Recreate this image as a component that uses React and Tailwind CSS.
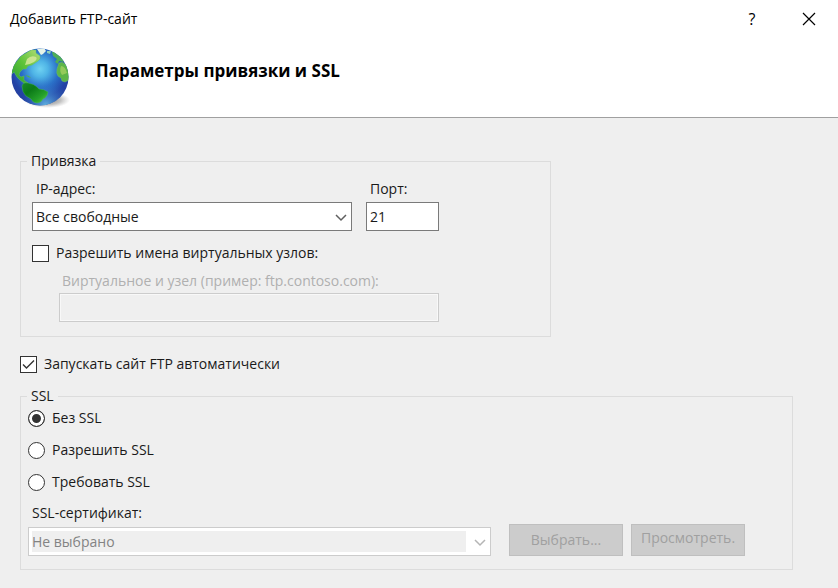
import { useState } from 'react'
import clsx from 'clsx'

const SSL_OPTIONS = [
  { value: 'none', label: 'Без SSL' },
  { value: 'allow', label: 'Разрешить SSL' },
  { value: 'require', label: 'Требовать SSL' },
]

const GlobeIcon = () => (
  <svg width="60" height="62" viewBox="-1 0 60 62" aria-hidden="true" className="shrink-0">
    <defs>
      <radialGradient id="ocean" cx="0.5" cy="0.36" r="0.64">
        <stop offset="0" stopColor="#6fd2f2" />
        <stop offset="0.22" stopColor="#4fb4e6" />
        <stop offset="0.5" stopColor="#2a70c8" />
        <stop offset="0.78" stopColor="#2343a6" />
        <stop offset="1" stopColor="#263f9e" />
      </radialGradient>
      <radialGradient id="glow" cx="0.6" cy="1" r="0.45">
        <stop offset="0" stopColor="#6fd0f0" stopOpacity="0.8" />
        <stop offset="1" stopColor="#2a70c8" stopOpacity="0" />
      </radialGradient>
      <linearGradient id="north" x1="0" y1="1" x2="1" y2="0">
        <stop offset="0" stopColor="#2b9c35" />
        <stop offset="0.5" stopColor="#5cc338" />
        <stop offset="1" stopColor="#b5dc78" />
      </linearGradient>
      <linearGradient id="south" x1="0" y1="0" x2="1" y2="1">
        <stop offset="0" stopColor="#1b8a2c" />
        <stop offset="0.35" stopColor="#0c7a18" />
        <stop offset="0.7" stopColor="#25a02a" />
        <stop offset="1" stopColor="#5fd040" />
      </linearGradient>
      <radialGradient id="shadow">
        <stop offset="0" stopColor="#555" stopOpacity="0.8" />
        <stop offset="0.6" stopColor="#777" stopOpacity="0.45" />
        <stop offset="1" stopColor="#999" stopOpacity="0" />
      </radialGradient>
      <clipPath id="sphere">
        <circle cx="29" cy="30" r="28.5" />
      </clipPath>
    </defs>
    <ellipse cx="36" cy="53" rx="23" ry="8" fill="url(#shadow)" />
    <circle cx="29" cy="30" r="28.5" fill="url(#ocean)" />
    <circle cx="29" cy="30" r="28.5" fill="url(#glow)" />
    <g clipPath="url(#sphere)" strokeLinejoin="round">
      <path
        d="M3 18 L10 9 L20 3 L25 3 L25 6 L29 9 L29 12 L27 14 L24 16 L21 18 L17 19 L15 22 L12 22 L9 25 L8 28 L10 30 L13 29 L13 33 L17 36 L13 36 L9 33 L6 30 L3 25 L1 27 L0 22 Z"
        fill="url(#north)"
        stroke="#5fc06a"
        strokeWidth="0.8"
        strokeOpacity="0.6"
      />
      <path d="M16 12 Q20 8 25 10 Q27 12 23 15 Q18 18 14 18 Z" fill="#d6e89a" opacity="0.85" />
      <path d="M26 2 L33 1 L35 4 L32 7 L30 8 L28 5 Z" fill="#e6f3e8" />
      <path d="M36 4 L40 4 L39 7 L36 6 Z" fill="#8fd0b8" />
      <path d="M41 5 L46 5 L51 11 L53 15 L48 14 L47 17 L44 15 L46 12 L42 9 Z" fill="#4fae58" />
      <path
        d="M48 16 Q52 14 55 18 L58 25 L58 33 L54 35 L51 34 L50 31 L47 29 Q45 26 46 22 Z"
        fill="#5db548"
        stroke="#6fc06a"
        strokeWidth="0.8"
        strokeOpacity="0.6"
      />
      <path d="M50 19 Q54 19 56 26 L51 28 Q48 24 50 19 Z" fill="#a3d060" opacity="0.8" />
      <path
        d="M11 39 Q12 35 17 36 Q23 37 26 40 L28 42 Q33 42 37 45 Q37 48 34 51 L32 52 Q30 56 26 56 Q22 56 20 52 L15 49 Q11 45 11 39 Z"
        fill="url(#south)"
        stroke="#4dbb66"
        strokeWidth="0.8"
        strokeOpacity="0.5"
      />
      <path d="M14 28 L18 29 L20 31 L17 30 Z" fill="#4db54a" />
    </g>
  </svg>
)

const SelectBox = ({ id, disabled, className, children }) => (
  <div className={clsx('relative h-[29px] border bg-white', disabled ? 'border-[#cccccc]' : 'border-[#7a7a7a]', className)}>
    <select
      id={id}
      disabled={disabled}
      className={clsx(
        'block h-full w-full appearance-none border-3 border-white border-r-24 text-sm outline-none',
        disabled ? 'bg-[#efefef] text-[#838383] opacity-100' : 'bg-white text-[#1a1a1a]'
      )}
    >
      {children}
    </select>
    <svg
      width="12"
      height="8"
      viewBox="0 0 12 8"
      fill="none"
      className={clsx('pointer-events-none absolute top-[11px] right-1', disabled ? 'text-[#b5b5b5]' : 'text-[#606060]')}
      aria-hidden="true"
    >
      <path d="M1 1 L6 6 L11 1" stroke="currentColor" strokeWidth="1.5" />
    </svg>
  </div>
)

const CheckBox = ({ label, checked, onChange, className }) => (
  <label className={clsx('flex w-fit items-center gap-[7px]', className)}>
    <span className="relative flex size-[17px]">
      <input
        type="checkbox"
        checked={checked}
        onChange={(e) => onChange(e.target.checked)}
        className="size-[17px] appearance-none border border-[#333333] bg-white"
      />
      {checked && (
        <svg width="17" height="17" viewBox="0 0 17 17" fill="none" className="pointer-events-none absolute inset-0" aria-hidden="true">
          <path d="M3 8.5 L6.5 12 L14 4.5" stroke="#333333" strokeWidth="1.4" />
        </svg>
      )}
    </span>
    {label}
  </label>
)

const App = () => {
  const [virtualHosts, setVirtualHosts] = useState(false)
  const [autoStart, setAutoStart] = useState(true)
  const [ssl, setSsl] = useState('none')
  const [port, setPort] = useState('21')
  const [host, setHost] = useState('')

  return (
    <div className="flex min-h-screen flex-col bg-[#efefef] font-['Open_Sans',sans-serif] text-sm leading-5 text-[#1a1a1a]">
      <header className="border-b border-[#a0a0a0] bg-white">
        <div className="flex h-[38px] items-center justify-between pr-5 pl-2.5">
          <h1 className="text-black">Добавить FTP-сайт</h1>
          <div className="flex items-center gap-10">
            <button type="button" aria-label="Справка" className="w-4 text-base text-black">?</button>
            <button type="button" aria-label="Закрыть" className="p-0.5">
              <svg width="14" height="14" viewBox="0 0 14 14" aria-hidden="true">
                <path d="M1 1 L13 13 M13 1 L1 13" stroke="#000" strokeWidth="1.2" />
              </svg>
            </button>
          </div>
        </div>
        <div className="flex h-[79px] items-start gap-[26px] pt-[9px] pl-2.5">
          <GlobeIcon />
          <h2 className="pt-3.5 text-[17px] leading-5 font-bold text-black">Параметры привязки и SSL</h2>
        </div>
      </header>

      <main className="flex flex-col px-5 pt-[33px] pb-4">
        <fieldset className="w-full max-w-[531px] border border-[#dcdcdc] pr-3 pb-3.5 pl-[11px]">
          <legend className="-ml-[5px] px-1">Привязка</legend>
          <div className="flex gap-3.5 pt-2">
            <div className="flex w-[320px] flex-col gap-[3px]">
              <label htmlFor="ip" className="pl-1">IP-адрес:</label>
              <SelectBox id="ip">
                <option>Все свободные</option>
              </SelectBox>
            </div>
            <div className="flex w-[73px] flex-col gap-[3px]">
              <label htmlFor="port" className="pl-1">Порт:</label>
              <input
                id="port"
                type="text"
                value={port}
                onChange={(e) => setPort(e.target.value)}
                className="h-[29px] w-full border border-[#7a7a7a] bg-white px-[3px] outline-none"
              />
            </div>
          </div>
          <CheckBox label="Разрешить имена виртуальных узлов:" checked={virtualHosts} onChange={setVirtualHosts} className="mt-3" />
          <div className="mt-2 ml-[27px] flex w-[380px] flex-col gap-0.5">
            <label htmlFor="host" className={clsx('pl-[3px]', !virtualHosts && 'text-[#b0b0b0]')}>
              Виртуальное и узел (пример: ftp.contoso.com):
            </label>
            <input
              id="host"
              type="text"
              value={host}
              disabled={!virtualHosts}
              onChange={(e) => setHost(e.target.value)}
              className="h-[29px] w-full border border-[#7a7a7a] bg-white px-[3px] outline-none disabled:border-[#cccccc] disabled:bg-[#efefef] disabled:inset-ring disabled:inset-ring-[#f8f8f8]"
            />
          </div>
        </fieldset>

        <CheckBox label="Запускать сайт FTP автоматически" checked={autoStart} onChange={setAutoStart} className="mt-[17px]" />

        <fieldset className="mt-3 w-full max-w-[773px] border border-[#dcdcdc] pr-3 pb-[13px] pl-[7px]">
          <legend className="-ml-px px-1">SSL</legend>
          <div className="flex flex-col gap-3 pt-0.5">
            {SSL_OPTIONS.map((option) => (
              <label key={option.value} className="flex w-fit items-center gap-[7px]">
                <input
                  type="radio"
                  name="ssl"
                  value={option.value}
                  checked={ssl === option.value}
                  onChange={() => setSsl(option.value)}
                  className="size-[17px] appearance-none rounded-full border border-[#333333] bg-white checked:border-[#333333] checked:bg-[#333333] checked:inset-ring-3 checked:inset-ring-white"
                />
                {option.label}
              </label>
            ))}
          </div>
          <label htmlFor="cert" className="mt-[11px] block w-fit pl-1">SSL-сертификат:</label>
          <div className="mt-px flex items-end gap-[18px]">
            <SelectBox id="cert" disabled className="min-w-0 max-w-[463px] flex-1">
              <option>Не выбрано</option>
            </SelectBox>
            <div className="flex gap-2">
              <button type="button" disabled className="h-8 w-[114px] border border-[#bfbfbf] bg-[#cccccc] text-[#a0a0a0]">
                Выбрать...
              </button>
              <button type="button" disabled className="h-8 w-[114px] border border-[#bfbfbf] bg-[#cccccc] pb-1 text-[#a0a0a0]">
                Просмотреть.
              </button>
            </div>
          </div>
        </fieldset>
      </main>
    </div>
  )
}

export default App
